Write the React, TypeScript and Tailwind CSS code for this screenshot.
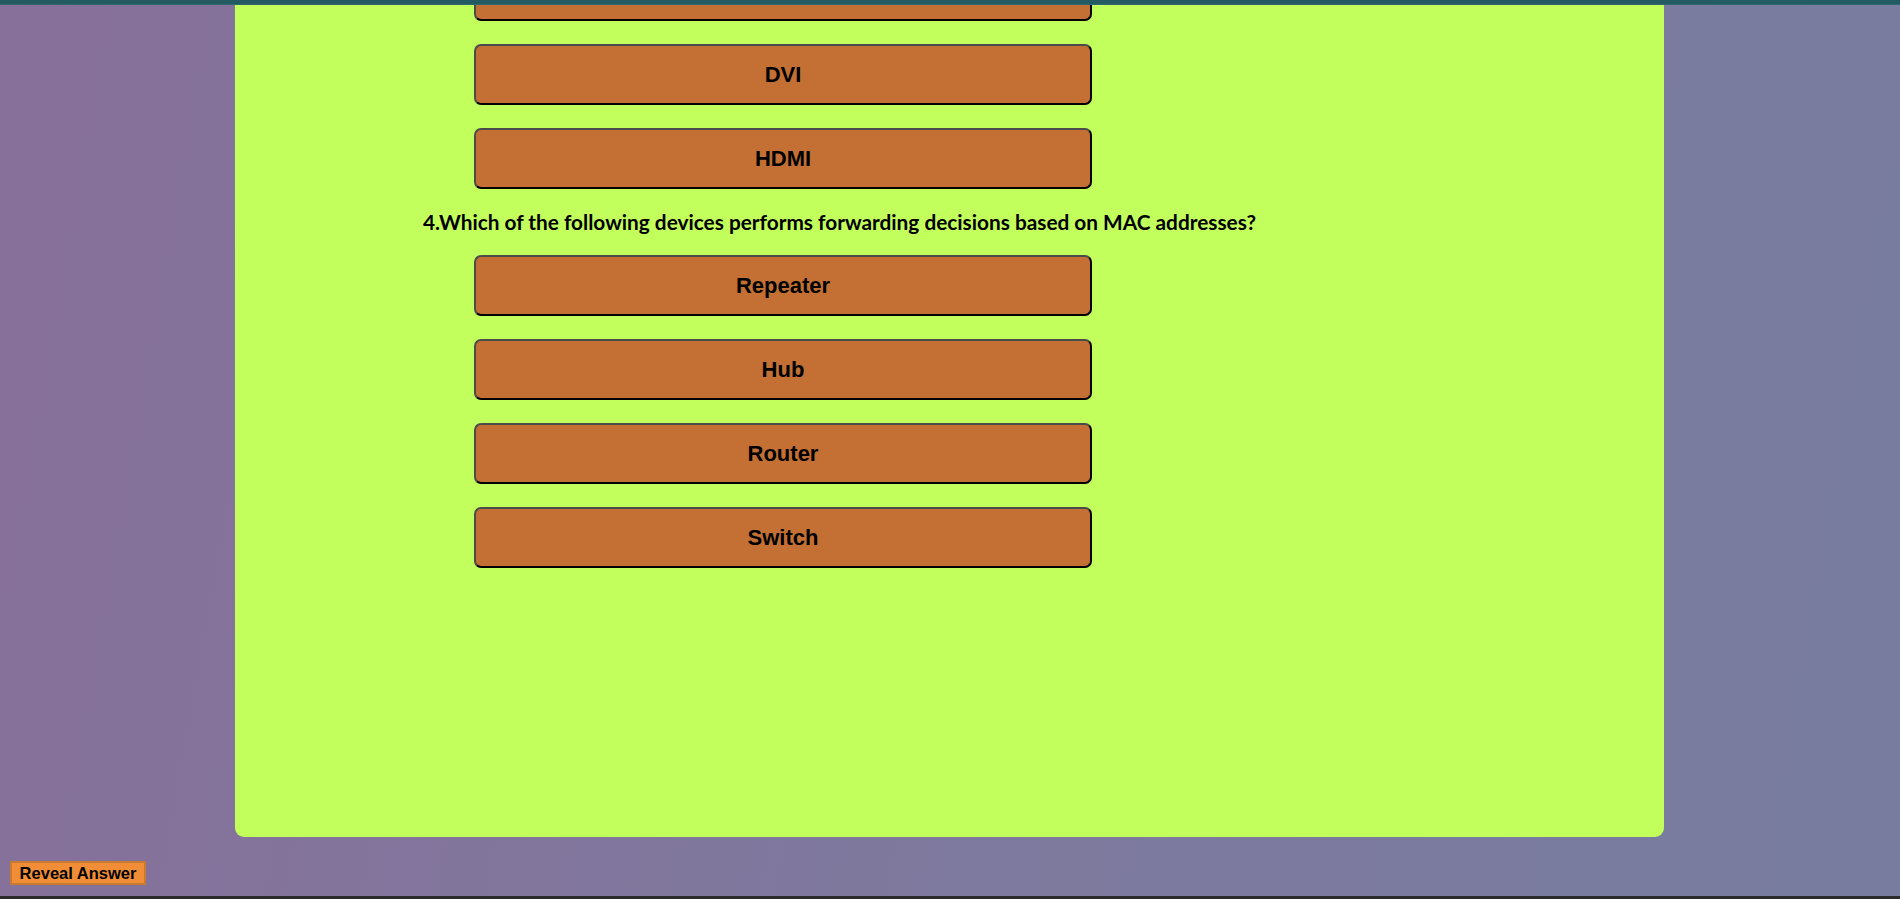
const options = ["Repeater", "Hub", "Router", "Switch"];

const OptionButton = ({ label }: { label: string }) => (
  <button className="w-[618px] h-[61px] shrink-0 ml-[51px] rounded-[7px] border-2 border-t-[#4b4b4b] border-l-[#4b4b4b] border-b-black border-r-black bg-[#c46f33] text-black text-[22px] font-bold font-['Liberation_Sans',Arial,sans-serif]">
    {label}
  </button>
);

export default function App() {
  return (
    <div className="h-[899px] w-full flex flex-col overflow-hidden bg-[linear-gradient(100deg,#87709a_0%,#7d7a9e_60%,#787d9f_100%)]">
      <div className="h-[5px] shrink-0 bg-[#245b63] border-b border-[#2f6870]" />
      <div className="flex-1 flex flex-col">
        <div className="ml-[235px] w-[1429px] h-[832px] shrink-0 rounded-b-[9px] bg-[#c2fe5c] overflow-hidden">
          <div className="flex flex-col gap-[23px] pl-[188px] mt-[-45px]">
            {/* previous question's last option, scrolled mostly out of view */}
            <OptionButton label="" />
            <OptionButton label="DVI" />
            <OptionButton label="HDMI" />
            <p className="h-[20px] leading-[20px] text-[20.8px] font-bold text-black font-['Lato','Open_Sans',sans-serif]">
              4.Which of the following devices performs forwarding decisions based on MAC addresses?
            </p>
            {options.map((o) => (
              <OptionButton key={o} label={o} />
            ))}
          </div>
        </div>
        <div className="mt-[24px] ml-[10px]">
          <button className="w-[136px] h-[24px] border-2 border-[#c77a30] bg-[#f08d36] text-black text-[16.5px] font-bold leading-none font-['Liberation_Sans',Arial,sans-serif]">
            Reveal Answer
          </button>
        </div>
      </div>
      <div className="h-[3px] shrink-0 bg-[#2b2b2b]" />
    </div>
  );
}
